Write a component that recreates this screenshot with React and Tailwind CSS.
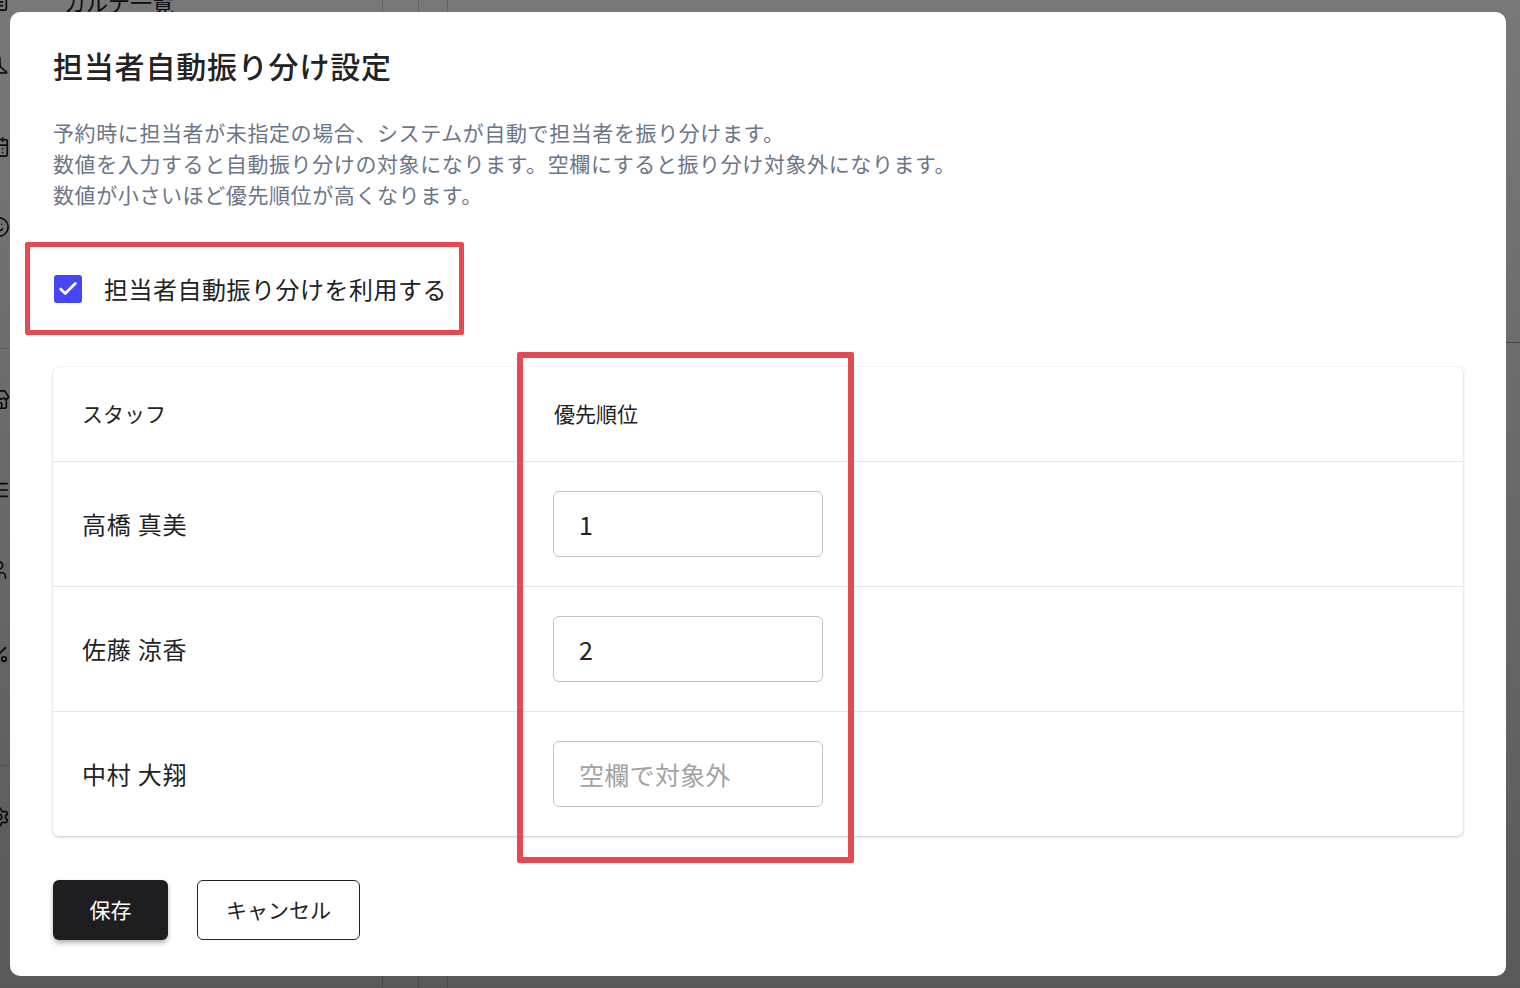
import React, { useState } from 'react';
import { Check, FileText, Send, CalendarDays, Smile, Store, AlignJustify, User, Percent, Settings } from 'lucide-react';

const initialStaff = [
  { id: 1, name: '高橋 真美', priority: '1' },
  { id: 2, name: '佐藤 涼香', priority: '2' },
  { id: 3, name: '中村 大翔', priority: '' },
];

const font = "font-['Noto_Sans_CJK_JP','Noto_Sans',sans-serif]";

export default function App() {
  const [enabled, setEnabled] = useState(true);
  const [staff, setStaff] = useState(initialStaff);

  const handlePriority = (id, value) => {
    setStaff(prev => prev.map(s => (s.id === id ? { ...s, priority: value } : s)));
  };

  return (
    <div className={`relative w-[1520px] h-[988px] overflow-hidden bg-white ${font}`}>
      {/* underlying page */}
      <div className="flex h-full">
        <div className="w-[383px] border-r border-gray-300 flex flex-col">
          <div className="flex items-center gap-[54px] -mt-[14px] -ml-[12px] h-[30px]">
            <FileText size={22} strokeWidth={1.8} className="text-gray-900" />
            <span className="text-[22px] text-gray-900 leading-none">カルテ一覧</span>
          </div>
          <div className="flex flex-col -ml-[12px] text-gray-900">
            <Send size={22} strokeWidth={1.8} className="mt-[40px] rotate-[200deg]" />
            <CalendarDays size={22} strokeWidth={1.8} className="mt-[58px]" />
            <Smile size={22} strokeWidth={1.8} className="mt-[58px]" />
            <div className="mt-[110px] h-px w-[60px] bg-gray-300" />
            <Store size={22} strokeWidth={1.8} className="mt-[40px]" />
            <AlignJustify size={22} strokeWidth={1.8} className="mt-[68px]" />
            <User size={22} strokeWidth={1.8} className="mt-[58px]" />
            <Percent size={22} strokeWidth={1.8} className="mt-[62px]" />
            <div className="mt-[100px] h-px w-[60px] bg-gray-300" />
            <Settings size={22} strokeWidth={1.8} className="mt-[40px]" />
          </div>
        </div>
        <div className="w-[36px] border-r border-gray-300" />
        <div className="w-[29px] border-r border-gray-300" />
        <div className="flex-1 flex flex-col">
          <div className="h-[343px] border-b border-gray-400" />
        </div>
      </div>

      {/* dim overlay */}
      <div className="absolute inset-0 bg-gradient-to-b from-black/[0.53] to-black/[0.65]" />

      {/* dialog */}
      <div className="absolute left-[10px] top-[12px] w-[1496px] h-[964px] bg-white rounded-[10px] pt-[34px] pl-[43px] pr-[43px]">
        <h2 className="text-[30px] leading-[39px] font-medium text-[#222] tracking-[0.8px]">
          担当者自動振り分け設定
        </h2>

        <div className="mt-[32px] text-[21px] leading-[31px] text-[#6b7588] tracking-[0.6px]">
          <p>予約時に担当者が未指定の場合、システムが自動で担当者を振り分けます。</p>
          <p>数値を入力すると自動振り分けの対象になります。空欄にすると振り分け対象外になります。</p>
          <p>数値が小さいほど優先順位が高くなります。</p>
        </div>

        {/* checkbox */}
        <label className="mt-[49px] h-[60px] flex items-center gap-[22px] cursor-pointer w-fit pl-px">
          <button
            type="button"
            onClick={() => setEnabled(v => !v)}
            className={`w-[28px] h-[28px] rounded-[3px] flex items-center justify-center ${enabled ? 'bg-[#4646f5]' : 'border-2 border-gray-500 bg-white'}`}
          >
            {enabled && <Check size={22} strokeWidth={3} className="text-white" />}
          </button>
          <span className="text-[24px] text-[#222] tracking-[0.5px]">担当者自動振り分けを利用する</span>
        </label>

        {/* staff table */}
        <div className="mt-[48px] rounded-[6px] bg-white shadow-[0_1px_3px_rgba(0,0,0,0.22),0_0_1px_rgba(0,0,0,0.08)]">
          <div className="grid grid-cols-[472px_1fr] h-[95px] border-b border-[#dfe6ee] items-center">
            <div className="pl-[29px] text-[21px] text-[#222]">スタッフ</div>
            <div className="pl-[29px] text-[21px] text-[#222]">優先順位</div>
          </div>
          {staff.map((s, i) => (
            <div
              key={s.id}
              className={`grid grid-cols-[472px_1fr] items-center ${i < staff.length - 1 ? 'h-[125px] border-b border-[#dfe6ee]' : 'h-[124px]'}`}
            >
              <div className="pl-[29px] text-[24px] text-[#222] tracking-[0.8px]">{s.name}</div>
              <div className="pl-[28px]">
                <input
                  type="text"
                  value={s.priority}
                  onChange={e => handlePriority(s.id, e.target.value)}
                  placeholder="空欄で対象外"
                  className="w-[270px] h-[66px] rounded-[6px] border border-[#c4c4c4] px-[25px] text-[25px] text-[#222] placeholder:text-[#a3a3a3] tracking-[0.3px] outline-none"
                />
              </div>
            </div>
          ))}
        </div>

        {/* actions */}
        <div className="mt-[44px] flex gap-[29px]">
          <button className="w-[115px] h-[60px] rounded-[6px] bg-[#1e1e20] text-white text-[21px] shadow-[0_3px_5px_rgba(0,0,0,0.3)]">
            保存
          </button>
          <button className="w-[163px] h-[60px] rounded-[6px] border border-[#222] bg-white text-[#222] text-[21px]">
            キャンセル
          </button>
        </div>

        {/* highlight annotations */}
        <div className="absolute left-[15px] top-[230px] w-[439px] h-[93px] border-[5px] border-[#e44a4f] rounded-[2px] pointer-events-none" />
        <div className="absolute left-[507px] top-[340px] w-[337px] h-[511px] border-[6px] border-[#e44a4f] rounded-[2px] pointer-events-none" />
      </div>
    </div>
  );
}
